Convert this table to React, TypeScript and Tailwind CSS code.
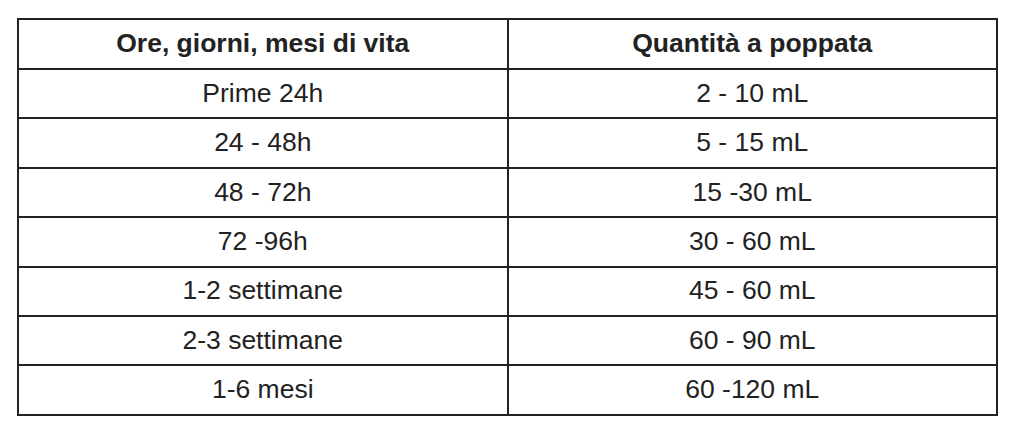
import React from 'react';

const ROWS: [string, string][] = [
    ['Prime 24h', '2 - 10 mL'],
    ['24 - 48h', '5 - 15 mL'],
    ['48 - 72h', '15 -30 mL'],
    ['72 -96h', '30 - 60 mL'],
    ['1-2 settimane', '45 - 60 mL'],
    ['2-3 settimane', '60 - 90 mL'],
    ['1-6 mesi', '60 -120 mL'],
];

export default function App() {
    return (
        <div
            className="w-[1024px] h-[434px] bg-white pl-[17px] pt-[18px]"
            style={{ fontFamily: '"Liberation Sans", Arial, sans-serif' }}
        >
            <table className="w-[981px] border-collapse border-2 border-[#222] text-[26.5px] text-[#222] table-fixed">
                <thead>
                    <tr className="h-[50px]">
                        <th className="border-2 border-[#222] font-bold text-center">Ore, giorni, mesi di vita</th>
                        <th className="border-2 border-[#222] font-bold text-center">Quantità a poppata</th>
                    </tr>
                </thead>
                <tbody>
                    {ROWS.map(([age, qty]) => (
                        <tr key={age} className="h-[49.4px]">
                            <td className="border-2 border-[#222] text-center">{age}</td>
                            <td className="border-2 border-[#222] text-center">{qty}</td>
                        </tr>
                    ))}
                </tbody>
            </table>
        </div>
    );
}
